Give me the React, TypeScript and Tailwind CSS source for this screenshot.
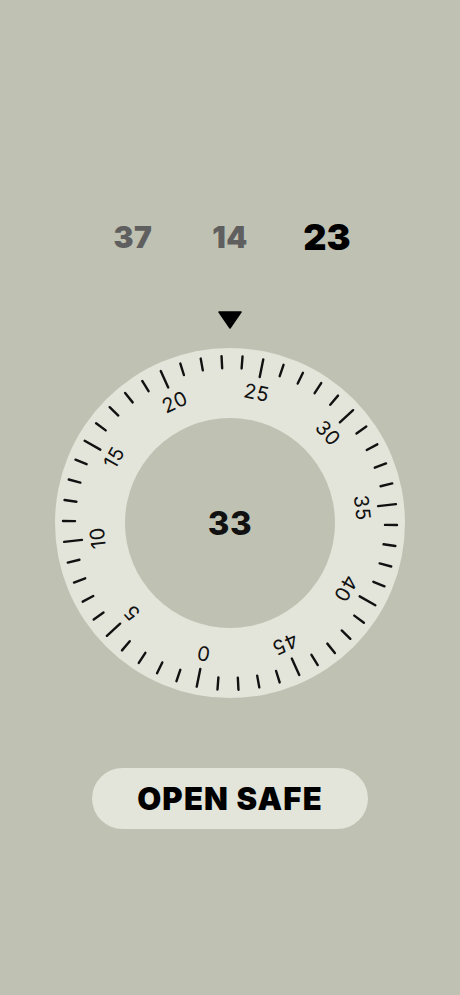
import React from 'react'

const SIZE = 350
const C = SIZE / 2
const OFFSET = 11.5 // degrees the dial is turned

function polar(r: number, deg: number) {
  const a = (deg * Math.PI) / 180
  return { x: C + r * Math.sin(a), y: C - r * Math.cos(a) }
}

function Dial({ value }: { value: number }) {
  const ticks = Array.from({ length: 50 }, (_, i) => i)

  return (
    <div className="relative h-[350px] w-[350px]">
      <svg width={SIZE} height={SIZE} viewBox={`0 0 ${SIZE} ${SIZE}`}>
        <circle cx={C} cy={C} r={175} fill="#e3e4da" />
        <circle cx={C} cy={C} r={105} fill="#bfc1b2" />
        {ticks.map((i) => {
          const deg = (i - 25) * 7.2 + OFFSET
          const major = i % 5 === 0
          const p1 = polar(major ? 149 : 155, deg)
          const p2 = polar(167, deg)
          return (
            <line
              key={i}
              x1={p1.x}
              y1={p1.y}
              x2={p2.x}
              y2={p2.y}
              stroke="#111"
              strokeWidth={2.4}
              strokeLinecap="round"
            />
          )
        })}
        {ticks
          .filter((i) => i % 5 === 0)
          .map((i) => {
            const deg = (i - 25) * 7.2 + OFFSET
            const p = polar(133, deg)
            return (
              <text
                key={i}
                x={p.x}
                y={p.y}
                transform={`rotate(${deg} ${p.x} ${p.y})`}
                textAnchor="middle"
                dominantBaseline="central"
                fontSize={20}
                letterSpacing={0.5}
                fill="#111"
                style={{ fontFamily: 'Inter, "Noto Sans", sans-serif' }}
              >
                {i}
              </text>
            )
          })}
      </svg>
      <div className="absolute inset-0 flex items-center justify-center">
        <span className="text-[33px] font-extrabold leading-none tracking-[0.5px] text-[#111]">
          {value}
        </span>
      </div>
    </div>
  )
}

export default function App() {
  const combo = [37, 14, 23]

  return (
    <div className="flex h-[995px] w-full flex-col items-center bg-[#bfc1b2] font-['Inter',sans-serif]">
      {/* combinação digitada */}
      <div className="mt-[219px] grid h-[36px] w-[291px] grid-cols-3 items-center">
        {combo.map((n, idx) => (
          <span
            key={idx}
            className={
              idx === combo.length - 1
                ? 'text-center text-[36px] font-black leading-none text-black'
                : 'text-center text-[30px] font-black leading-none tracking-[0.5px] text-[#5f5f5f]'
            }
          >
            {n}
          </span>
        ))}
      </div>

      {/* ponteiro */}
      <svg className="mt-[56px]" width="24" height="18" viewBox="0 0 24 18">
        <path d="M1 1 H23 L12 17 Z" fill="#000" strokeLinejoin="round" stroke="#000" strokeWidth="1.5" />
      </svg>

      <div className="mt-[19px]">
        <Dial value={33} />
      </div>

      <button className="mt-[70px] flex h-[61px] w-[276px] items-center justify-center rounded-full bg-[#e3e4da]">
        <span className="text-[31px] font-black leading-none tracking-[1.2px] text-black">
          OPEN SAFE
        </span>
      </button>
    </div>
  )
}
